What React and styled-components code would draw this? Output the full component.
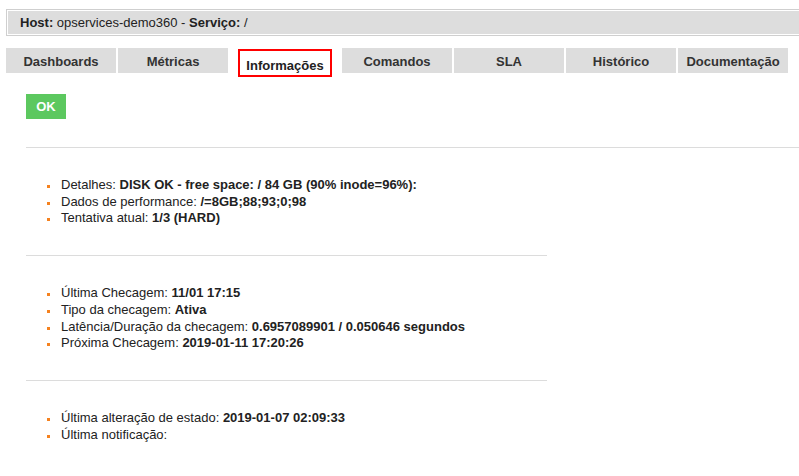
import React from "react";
import styled, { createGlobalStyle } from "styled-components";

const Global = createGlobalStyle`
  html, body { margin: 0; padding: 0; background: #fff; overflow: hidden; }
  body { font-family: "Liberation Sans", Arial, sans-serif; color: #222; }
`;

const Page = styled.div`
  padding: 9px 0 0 6px;
  width: 799px;
  box-sizing: border-box;
`;

const HeaderBox = styled.div`
  border: 1px solid #cfcfcf;
  border-right: none;
  padding: 1px 0 1px 1px;
  margin-right: -20px;
`;

const HeaderBar = styled.div`
  background: #dddddd;
  height: 23px;
  display: flex;
  align-items: center;
  padding-left: 12px;
  font-size: 13px;
  color: #222;
  b { font-weight: bold; }
`;

const Tabs = styled.div`
  display: flex;
  gap: 2px;
  margin-top: 12px;
  height: 29px;
`;

const Tab = styled.div`
  width: 110px;
  height: 25px;
  background: #dddddd;
  display: flex;
  align-items: center;
  justify-content: center;
  font-size: 13px;
  font-weight: bold;
  color: #333;
  box-sizing: border-box;
  padding-top: 1px;
`;

const ActiveTab = styled(Tab)`
  width: 94px;
  margin: 1px 8px 0;
  height: 28px;
  background: #fff;
  border: 2px solid #ff0000;
  color: #222;
  padding-top: 4px;
`;

const Content = styled.div`
  padding-left: 20px;
  margin-top: 17px;
`;

const Badge = styled.div`
  width: 40px;
  height: 25px;
  background: #5cc85f;
  color: #fff;
  font-size: 13px;
  font-weight: bold;
  display: flex;
  align-items: center;
  justify-content: center;
`;

const Rule = styled.div`
  height: 1px;
  background: #dcdcdc;
  margin-top: ${(p) => p.$top}px;
  width: ${(p) => (p.$full ? "calc(100% + 20px)" : "521px")};
`;

const List = styled.ul`
  list-style: none;
  margin: ${(p) => p.$top}px 0 0;
  padding: 0 0 0 35px;
  font-size: 13px;
  line-height: 16.7px;
`;

const Item = styled.li`
  position: relative;
  &::before {
    content: "";
    position: absolute;
    left: -14px;
    top: 8px;
    width: 3px;
    height: 3px;
    background: #f5821f;
  }
`;

const Sections = [
  {
    full: true,
    ruleTop: 28,
    listTop: 29,
    items: [
      ["Detalhes: ", "DISK OK - free space: / 84 GB (90% inode=96%):"],
      ["Dados de performance: ", "/=8GB;88;93;0;98"],
      ["Tentativa atual: ", "1/3 (HARD)"],
    ],
  },
  {
    ruleTop: 28,
    listTop: 29,
    items: [
      ["Última Checagem: ", "11/01 17:15"],
      ["Tipo da checagem: ", "Ativa"],
      ["Latência/Duração da checagem: ", "0.6957089901 / 0.050646 segundos"],
      ["Próxima Checagem: ", "2019-01-11 17:20:26"],
    ],
  },
  {
    ruleTop: 28,
    listTop: 29,
    items: [
      ["Última alteração de estado: ", "2019-01-07 02:09:33"],
      ["Última notificação: ", ""],
    ],
  },
];

const tabs = ["Dashboards", "Métricas", "Informações", "Comandos", "SLA", "Histórico", "Documentação"];

export default function App() {
  return (
    <Page>
      <Global />
      <HeaderBox>
        <HeaderBar>
          <b>Host:</b>&nbsp;opservices-demo360 -&nbsp;<b>Serviço:</b>&nbsp;/
        </HeaderBar>
      </HeaderBox>
      <Tabs>
        {tabs.map((t) =>
          t === "Informações" ? <ActiveTab key={t}>{t}</ActiveTab> : <Tab key={t}>{t}</Tab>
        )}
      </Tabs>
      <Content>
        <Badge>OK</Badge>
        {Sections.map((s, i) => (
          <React.Fragment key={i}>
            <Rule $full={s.full} $top={s.ruleTop} />
            <List $top={s.listTop}>
              {s.items.map(([k, v]) => (
                <Item key={k}>
                  {k}
                  <b>{v}</b>
                </Item>
              ))}
            </List>
          </React.Fragment>
        ))}
      </Content>
    </Page>
  );
}
